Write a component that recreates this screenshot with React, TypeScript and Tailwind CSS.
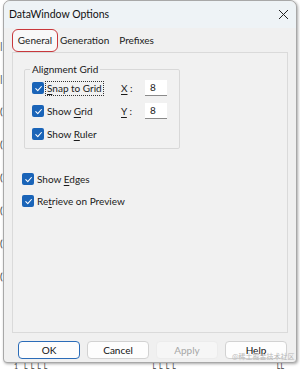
import React from 'react';

const font = { fontFamily: 'Lato, "Segoe UI", "Noto Sans", sans-serif' };

const Check: React.FC = () => (
  <span className="flex h-[12px] w-[12px] shrink-0 items-center justify-center rounded-[2px] bg-[#1a64b8]">
    <svg width="9" height="9" viewBox="0 0 10 10" fill="none">
      <path d="M2 5.2 L4.2 7.4 L8.2 2.8" stroke="#ffffff" strokeWidth="1.2" strokeLinecap="round" strokeLinejoin="round" />
    </svg>
  </span>
);

interface CheckRowProps {
  children: React.ReactNode;
  focused?: boolean;
}

const CheckRow: React.FC<CheckRowProps> = ({ children, focused }) => (
  <div className="flex h-[16px] items-center gap-[1px] whitespace-nowrap">
    <Check />
    <span className={focused ? 'border border-dotted border-[#333] px-[1px] leading-[13px]' : 'px-[2px] leading-[13px]'}>
      {children}
    </span>
  </div>
);

const Field: React.FC<{ label: string; value: string }> = ({ label, value }) => (
  <div className="flex h-[16px] items-center">
    <span className="w-[24px]">
      <span className="underline underline-offset-2">{label}</span> :
    </span>
    <div className="flex h-[16px] w-[22px] items-center border-b border-[#8a8a8a] bg-white pl-[5px]">
      {value}
    </div>
  </div>
);

const Button: React.FC<{ label: string; primary?: boolean; disabled?: boolean }> = ({ label, primary, disabled }) => (
  <div
    className={
      'flex h-[18px] w-[62px] items-center justify-center rounded-[4px] border ' +
      (primary
        ? 'border-[#2b6cb8] bg-[#fdfdfd] text-[#111]'
        : disabled
          ? 'border-[#ececec] bg-[#f6f6f6] text-[#a7a7a7]'
          : 'border-[#d2d2d2] bg-[#fdfdfd] text-[#111]')
    }
  >
    {label}
  </div>
);

export default function App() {
  return (
    <div className="relative h-[369px] w-[300px] overflow-hidden bg-white text-[10px] text-[#1a1a1a]" style={font}>
      <div className="flex h-[363px]">
        <div className="flex w-[3px] flex-col gap-[23px] pt-[40px] leading-none text-[#333]">
          <span>|</span>
          <span>|</span>
          <span>(</span>
          <span>(</span>
          <span>(</span>
          <span>(</span>
          <span>(</span>
          <span>(</span>
        </div>
        <div className="flex w-[294px] flex-col rounded-t-[7px] rounded-b-[4px] border border-[#a8a8a8] bg-[#f0f0f0] shadow-[1px_1px_3px_rgba(0,0,0,0.35)]">
          <div className="flex h-[27px] items-center justify-between rounded-t-[7px] bg-[#eef3f6] pl-[5px] pr-[7px] text-[10.5px] text-[#111]">
            <span>DataWindow Options</span>
            <svg width="11" height="11" viewBox="0 0 11 11">
              <path d="M1 1 L10 10 M10 1 L1 10" stroke="#222" strokeWidth="1" />
            </svg>
          </div>
          <div className="flex flex-col px-[8px]">
            <div className="flex h-[24px] items-end">
              <div className="flex h-[23px] w-[46px] items-center justify-center rounded-[6px] border border-[#c8383c] bg-[#f8f8f8]">
                General
              </div>
              <span className="ml-[2px] pb-[4px]">Generation</span>
              <span className="ml-[10px] pb-[4px]">Prefixes</span>
            </div>
            <div className="h-[281px] border border-[#dadada] bg-[#f1f1f1] pl-[9px] pt-[9px]">
              <fieldset className="relative ml-[2px] h-[87px] w-[156px] rounded-[2px] border border-[#d8d8d8] pl-[7px] pt-[3px]">
                <legend className="-ml-[2px] px-[2px]">Alignment Grid</legend>
                <div className="flex">
                  <div className="flex w-[89px] flex-col gap-[7px]">
                    <CheckRow focused>
                      <span className="underline underline-offset-2">S</span>nap to Grid
                    </CheckRow>
                    <CheckRow>
                      Show <span className="underline underline-offset-2">G</span>rid
                    </CheckRow>
                    <CheckRow>
                      Show <span className="underline underline-offset-2">R</span>uler
                    </CheckRow>
                  </div>
                  <div className="flex flex-col gap-[7px]">
                    <Field label="X" value="8" />
                    <Field label="Y" value="8" />
                  </div>
                </div>
              </fieldset>
              <div className="mt-[22px] flex flex-col gap-[6px]">
                <CheckRow>
                  Show <span className="underline underline-offset-2">E</span>dges
                </CheckRow>
                <CheckRow>
                  Re<span className="underline underline-offset-2">t</span>rieve on Preview
                </CheckRow>
              </div>
            </div>
            <div className="mt-[8px] flex gap-[7px] pl-[6px]">
              <Button label="OK" primary />
              <Button label="Cancel" />
              <Button label="Apply" disabled />
              <Button label="Help" />
            </div>
          </div>
        </div>
      </div>
      <div className="ml-[14px] flex gap-[2px] text-[7px] leading-[6px] text-[#444]">
        <span>1</span>
        <span className="ml-[4px] tracking-[3px]">LLLL</span>
        <span className="ml-[100px] tracking-[3px]">LLLL</span>
        <span className="ml-[96px]">LL</span>
      </div>
      <span className="absolute left-[232px] top-[353px] text-[7px] leading-[7px] text-[#b8b8b8]" style={{ fontFamily: '"Noto Sans CJK SC", sans-serif' }}>
        @稀土掘金技术社区
      </span>
    </div>
  );
}
